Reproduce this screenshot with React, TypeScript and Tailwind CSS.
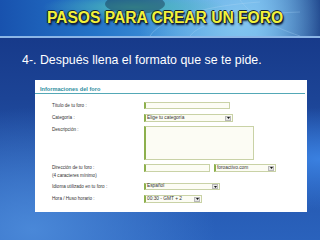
import type { ReactNode } from "react";

const font = { fontFamily: '"Liberation Sans", Arial, sans-serif' };

function Arrow() {
	return (
		<span className="ml-auto mr-[1px] flex h-[5px] w-[6px] items-center justify-center border border-[#b8b8b8] bg-[#e6e6e6]">
			<svg viewBox="0 0 6 4" className="h-[2px] w-[3px]">
				<path d="M0 0h6L3 4z" fill="#111" />
			</svg>
		</span>
	);
}

function Field({
	width,
	height,
	children,
	select,
}: {
	width: string;
	height: string;
	children?: ReactNode;
	select?: boolean;
}) {
	return (
		<div
			className={`flex items-center border border-l-2 border-[#c9d2a6] border-l-[#8db04c] bg-[#fcfcf4] pl-[1px] text-[4.8px] leading-none text-[#333] ${width} ${height}`}
		>
			<span>{children}</span>
			{select && <Arrow />}
		</div>
	);
}

function Label({ children }: { children: ReactNode }) {
	return (
		<div className="w-[109px] shrink-0 pl-[17px] text-[4.6px] leading-[8px] text-[#333]">
			{children}
		</div>
	);
}

export default function App() {
	return (
		<div className="flex h-[240px] w-[320px] flex-col overflow-hidden" style={font}>
			{/* Banner */}
			<div className="relative flex h-[36px] shrink-0 items-center justify-center bg-[radial-gradient(ellipse_at_42%_20%,#4cbab8_0%,transparent_35%),radial-gradient(circle_at_75%_60%,#84c6f0_0%,transparent_42%),linear-gradient(90deg,#1852ae_0%,#2474c8_30%,#4294da_55%,#5ea6e4_80%,#0d2f7a_100%)] pl-[10px]">
				<svg viewBox="0 0 320 36" className="absolute inset-0 h-full w-full">
					<path d="M150 36 C 160 20 200 6 260 2" stroke="#a8d4f4" strokeOpacity="0.35" fill="none" />
					<path d="M190 36 C 200 22 240 14 300 12" stroke="#a8d4f4" strokeOpacity="0.3" fill="none" />
					<path d="M240 0 C 250 14 270 26 300 36" stroke="#a8d4f4" strokeOpacity="0.3" fill="none" />
					<ellipse cx="135" cy="4" rx="30" ry="10" fill="#0b1f3a" fillOpacity="0.4" />
				</svg>
				<span className="relative text-[15.6px] font-bold text-[#f2f23a] [text-shadow:1px_1px_0_#142238,-1px_0_0_#142238,0_-1px_0_#142238,1px_2px_2px_#0a1428]">
					PASOS PARA CREAR UN FORO
				</span>
			</div>
			<div className="h-[2px] shrink-0 bg-[#8cb6e6]" />

			{/* Slide body */}
			<div className="flex flex-1 flex-col bg-[radial-gradient(ellipse_at_10%_95%,#4a88d8_0%,transparent_45%),radial-gradient(ellipse_at_100%_60%,#3a80e0_0%,transparent_30%),linear-gradient(180deg,#173a8a_0%,#1c4496_30%,#2558b0_70%,#2a62bc_100%)]">
				<p className="pl-[22px] pt-[15px] text-[12.4px] leading-[14px] text-white">
					4-. Después llena el formato que se te pide.
				</p>

				{/* Form screenshot */}
				<div className="ml-[35px] mt-[13px] flex h-[132px] w-[272px] flex-col bg-white">
					<div className="mr-[2px] h-[14px] border-b border-[#54a8b6] pl-[5px] pt-[6px] text-[5.6px] font-bold leading-[6px] text-[#2f8ea0]">
						Informaciones del foro
					</div>

					<div className="mt-[8px] flex h-[7px] items-center">
						<Label>Título de tu foro :</Label>
						<Field width="w-[86px]" height="h-[7px]" />
					</div>

					<div className="mt-[5px] flex h-[8px] items-center">
						<Label>Categoría :</Label>
						<Field width="w-[89px]" height="h-[8px]" select>
							Elige tu categoría
						</Field>
					</div>

					<div className="mt-[4px] flex h-[34px] items-start">
						<Label>Descripción :</Label>
						<Field width="w-[110px]" height="h-[34px]" />
					</div>

					<div className="mt-[4px] flex h-[16px] items-start">
						<div className="w-[109px] shrink-0 pl-[17px] text-[4.6px] leading-[8px] text-[#333]">
							Dirección de tu foro :
							<br />
							(4 caracteres mínimo)
						</div>
						<div className="flex gap-[4px]">
							<Field width="w-[66px]" height="h-[8px]" />
							<Field width="w-[62px]" height="h-[8px]" select>
								foroactivo.com
							</Field>
						</div>
					</div>

					<div className="mt-[3px] flex h-[7px] items-center">
						<Label>Idioma utilizado en tu foro :</Label>
						<Field width="w-[76px]" height="h-[7px]" select>
							Español
						</Field>
					</div>

					<div className="mt-[5px] flex h-[8px] items-center">
						<Label>Hora / Huso horario :</Label>
						<Field width="w-[58px]" height="h-[8px]" select>
							00:30 - GMT + 2
						</Field>
					</div>
				</div>
			</div>
		</div>
	);
}
